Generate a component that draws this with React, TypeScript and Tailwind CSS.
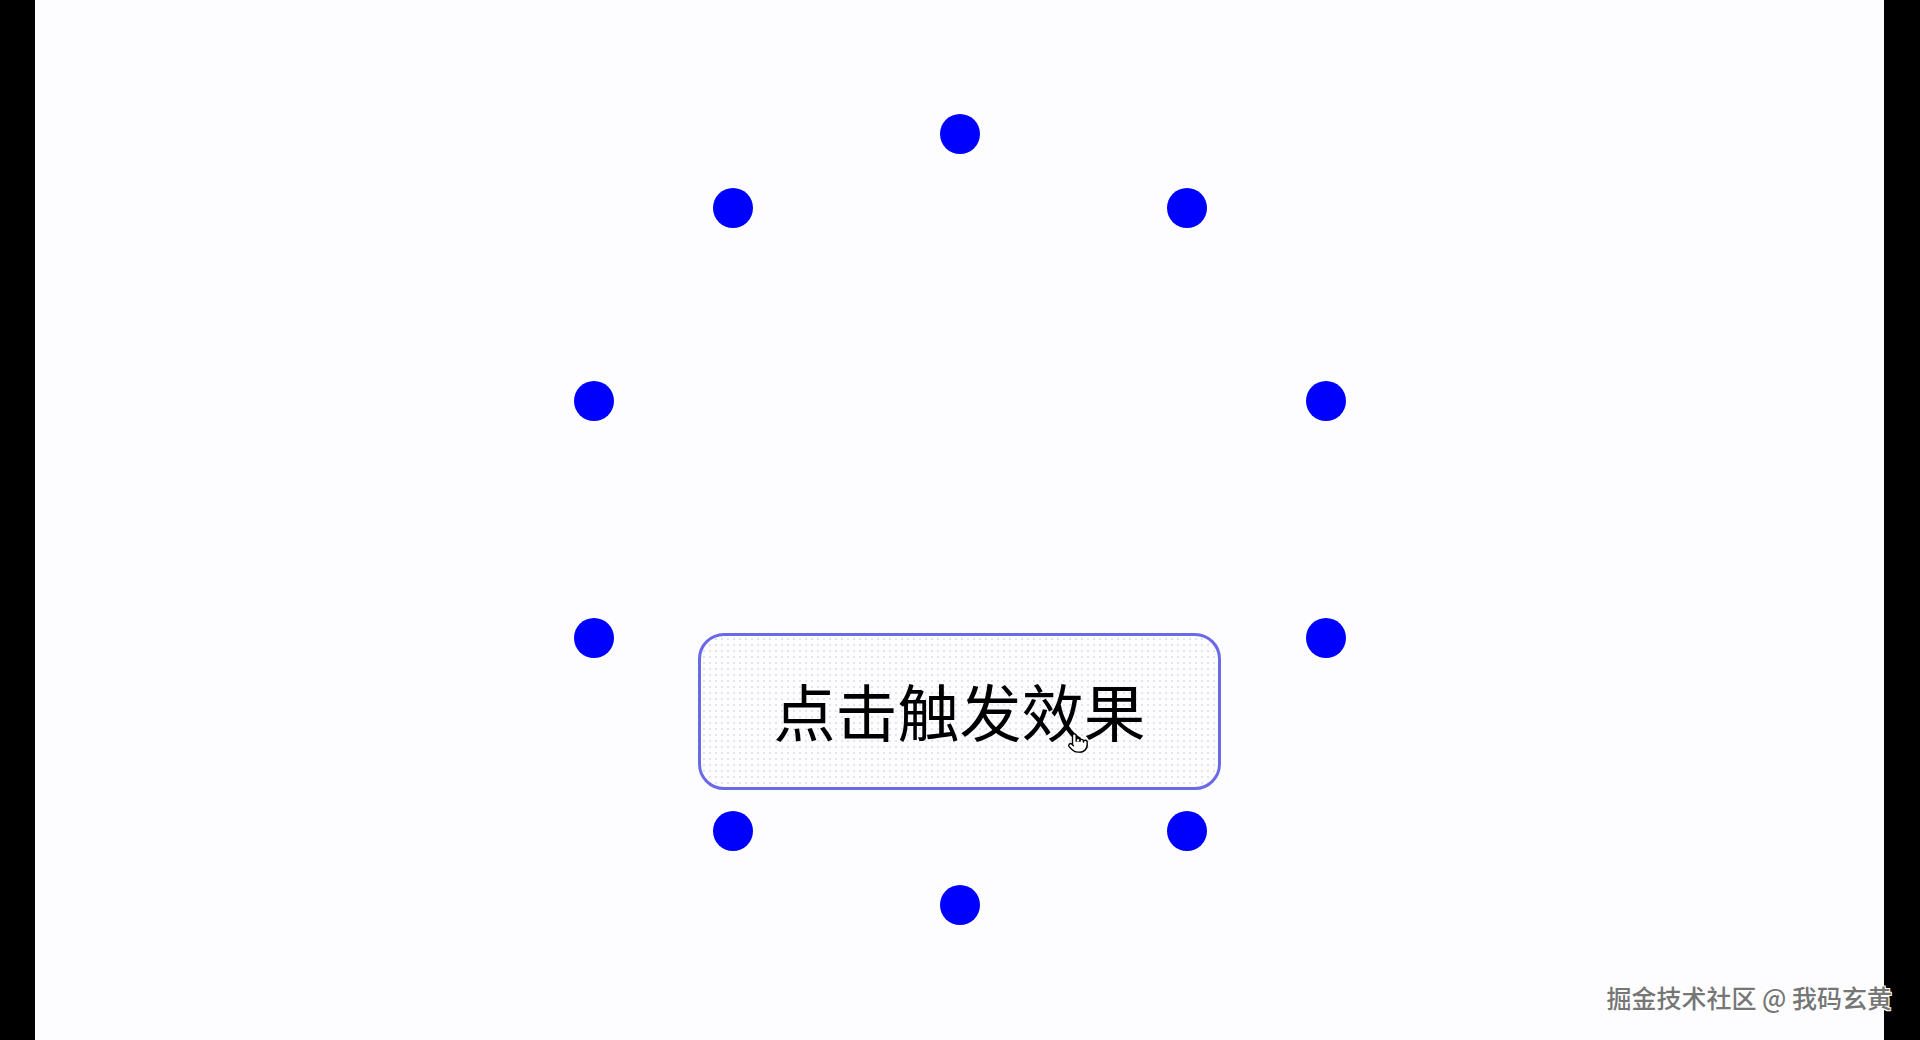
import { Pointer } from 'lucide-react';

const dots = [
  { x: 960, y: 134 },
  { x: 733, y: 208 },
  { x: 1187, y: 208 },
  { x: 594, y: 401 },
  { x: 1326, y: 401 },
  { x: 594, y: 638 },
  { x: 1326, y: 638 },
  { x: 733, y: 831 },
  { x: 1187, y: 831 },
  { x: 960, y: 905 },
];

export default function App() {
  return (
    <div className="relative flex h-[1040px] w-[1920px] overflow-hidden bg-black font-['Noto_Sans_CJK_SC',sans-serif]">
      <div className="w-[35px] shrink-0 bg-black" />
      <div className="relative flex-1 bg-[#fdfdff]">
        {dots.map((d, i) => (
          <span
            key={i}
            className="absolute h-10 w-10 -translate-x-1/2 -translate-y-1/2 rounded-full bg-[#0000ff]"
            style={{ left: d.x - 35, top: d.y }}
          />
        ))}
        <button className="absolute left-[663px] top-[633px] flex h-[157px] w-[523px] items-center justify-center rounded-[26px] border-[3px] border-[#6a6ae8] bg-[#fdfdff] bg-[radial-gradient(#e4e4ec_1px,transparent_1px)] bg-[length:6px_6px] pb-1 text-[62px] leading-none text-black">
          点击触发效果
          <Pointer
            size={22}
            strokeWidth={1.5}
            className="absolute left-[366px] top-[96px] fill-white text-black"
          />
        </button>
      </div>
      <div className="w-[36px] shrink-0 bg-black" />
      <div className="absolute right-[28px] top-[985px] text-[25px] leading-none font-medium text-[#767676] [text-shadow:1px_1px_0_#fff,-1px_-1px_0_#fff,1px_-1px_0_#fff,-1px_1px_0_#fff]">
        掘金技术社区 @ 我码玄黄
      </div>
    </div>
  );
}
